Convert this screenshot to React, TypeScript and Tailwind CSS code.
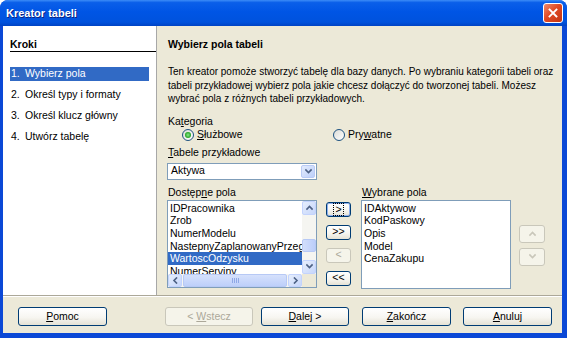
import React from "react";

const U = ({ children }: { children: React.ReactNode }) => (
  <span className="underline underline-offset-[1px]">{children}</span>
);

function Chevron({ dir, color = "#4d6185", size = 7 }: { dir: "up" | "down" | "left" | "right"; color?: string; size?: number }) {
  const paths: Record<string, string> = {
    up: "M1 5 L3.5 2.5 L6 5",
    down: "M1 2 L3.5 4.5 L6 2",
    left: "M4.5 1 L2 3.5 L4.5 6",
    right: "M2.5 1 L5 3.5 L2.5 6",
  };
  return (
    <svg width={size} height={size} viewBox="0 0 7 7">
      <path d={paths[dir]} fill="none" stroke={color} strokeWidth="1.6" strokeLinecap="square" />
    </svg>
  );
}

function ScrollBtn({ dir, className = "" }: { dir: "up" | "down" | "left" | "right"; className?: string }) {
  return (
    <div
      className={`flex items-center justify-center rounded-[2px] border border-[#c3d3fd] bg-[linear-gradient(135deg,#e6eefc_0%,#c6d6fb_100%)] ${className}`}
    >
      <Chevron dir={dir} />
    </div>
  );
}

function Radio({ checked }: { checked?: boolean }) {
  return (
    <span className="w-[12px] h-[12px] rounded-full border border-[#1c5180] bg-[linear-gradient(135deg,#dcdcd7_0%,#ffffff_100%)] flex items-center justify-center shrink-0">
      {checked && <span className="w-[6px] h-[6px] rounded-full bg-[radial-gradient(circle,#8ae88a_0%,#21a121_70%)]" />}
    </span>
  );
}

function Btn({
  children,
  disabled,
  className = "",
  focus,
}: {
  children: React.ReactNode;
  disabled?: boolean;
  className?: string;
  focus?: boolean;
}) {
  return (
    <div
      className={`flex items-center justify-center rounded-[3px] border ${
        disabled
          ? "border-[#c9c7ba] bg-[#f5f4ea] text-[#aca899]"
          : "border-[#003c74] bg-[linear-gradient(180deg,#ffffff_0%,#f7f6f1_55%,#e5e2d5_100%)] text-black"
      } ${focus ? "shadow-[inset_0_0_0_1px_#8fb0ef]" : ""} ${className}`}
    >
      {focus ? (
        <span className="border border-dotted border-black px-[1px] leading-[11px]">{children}</span>
      ) : (
        children
      )}
    </div>
  );
}

export default function App() {
  const available = ["IDPracownika", "Zrob", "NumerModelu", "NastepnyZaplanowanyPrzeglad", "WartoscOdzysku", "NumerServiny"];
  const chosen = ["IDAktywow", "KodPaskowy", "Opis", "Model", "CenaZakupu"];
  return (
    <div className="w-[567px] h-[338px] bg-white">
      <div className="w-[567px] h-[338px] flex flex-col rounded-t-[8px] overflow-hidden bg-[#0b48d6] font-['Liberation_Sans',Arial,sans-serif] text-[10.5px] text-black">
        {/* Title bar */}
        <div className="h-[26px] shrink-0 flex items-center justify-between pl-[6px] pr-[4px] bg-[linear-gradient(180deg,#3c8cf7_0%,#0a5fe9_10%,#0055e5_45%,#0052dd_85%,#0043c4_100%)]">
          <span className="text-white font-bold text-[11px] [text-shadow:1px_1px_0_#0b2383]">Kreator tabeli</span>
          <div className="w-[20px] h-[20px] rounded-[3px] border border-white bg-[linear-gradient(135deg,#f08a6c_0%,#e04a25_45%,#c23512_100%)] flex items-center justify-center">
            <svg width="10" height="10" viewBox="0 0 10 10">
              <path d="M1.5 1.5 L8.5 8.5 M8.5 1.5 L1.5 8.5" stroke="white" strokeWidth="1.8" strokeLinecap="square" />
            </svg>
          </div>
        </div>

        {/* Body */}
        <div className="flex-1 ml-[3px] mr-[5px] mb-[5px] bg-[#ece9d8] flex flex-col">
          <div className="h-[269px] flex">
            {/* Left panel */}
            <div className="w-[154px] shrink-0 bg-white border-r border-[#a8a8a8] pl-[7px] pt-[12px]">
              <div className="font-bold leading-[13px] border-b border-black">Kroki</div>
              <div className="flex flex-col gap-[7px] mt-[15px] mr-[7px]">
                <div className="h-[14px] flex items-center bg-[#316ac5] text-white">
                  <span className="w-[15px] pl-[1px]">1.</span>
                  <span>Wybierz pola</span>
                </div>
                <div className="h-[14px] flex items-center">
                  <span className="w-[15px] pl-[1px]">2.</span>
                  <span>Określ typy i formaty</span>
                </div>
                <div className="h-[14px] flex items-center">
                  <span className="w-[15px] pl-[1px]">3.</span>
                  <span>Określ klucz główny</span>
                </div>
                <div className="h-[14px] flex items-center">
                  <span className="w-[15px] pl-[1px]">4.</span>
                  <span>Utwórz tabelę</span>
                </div>
              </div>
            </div>

            {/* Right panel */}
            <div className="flex-1 min-w-0 overflow-hidden pl-[11px] pt-[12px] flex flex-col">
              <div className="font-bold leading-[13px]">Wybierz pola tabeli</div>
              <div className="mt-[14px] leading-[13.5px] whitespace-nowrap text-[10px]">
                Ten kreator pomoże stworzyć tabelę dla bazy danych. Po wybraniu kategorii tabeli oraz
                <br />
                tabeli przykładowej wybierz pola jakie chcesz dołączyć do tworzonej tabeli. Możesz
                <br />
                wybrać pola z różnych tabeli przykładowych.
              </div>
              <div className="mt-[9px] leading-[13px]">
                Ka<U>t</U>egoria
              </div>
              <div className="h-[14px] flex items-center pl-[14px]">
                <div className="w-[151px] flex items-center gap-[3px]">
                  <Radio checked />
                  <span>
                    <U>S</U>łużbowe
                  </span>
                </div>
                <div className="flex items-center gap-[3px]">
                  <Radio />
                  <span>
                    Pry<U>w</U>atne
                  </span>
                </div>
              </div>
              <div className="mt-[4px] leading-[13px]">
                <U>T</U>abele przykładowe
              </div>
              <div className="mt-[4px] w-[150px] h-[17px] border border-[#7f9db9] bg-white flex items-center justify-between pl-[3px] pr-[1px] -ml-[1px]">
                <span>Aktywa</span>
                <div className="w-[14px] h-[13px] rounded-[2px] border border-[#b9cbf6] bg-[linear-gradient(135deg,#e3ecfd_0%,#bccffa_100%)] flex items-center justify-center">
                  <Chevron dir="down" />
                </div>
              </div>

              {/* Lists row */}
              <div className="mt-[6px] flex items-start">
                <div className="w-[150px] flex flex-col -ml-[1px]">
                  <div className="h-[14px] leading-[13px] pl-[1px]">
                    Dostęp<U>n</U>e pola
                  </div>
                  <div className="h-[88px] border border-[#7f9db9] bg-white flex flex-col">
                    <div className="flex h-[73px]">
                      <div className="flex-1 overflow-hidden pt-[1px]">
                        {available.map((it, i) => (
                          <div
                            key={it}
                            className={`h-[12.7px] leading-[12.7px] pl-[2px] whitespace-nowrap ${
                              i === 4 ? "bg-[#316ac5] text-white" : ""
                            }`}
                          >
                            {it}
                          </div>
                        ))}
                      </div>
                      <div className="w-[14px] flex flex-col bg-[#f5f5f1]">
                        <ScrollBtn dir="up" className="h-[14px]" />
                        <div className="flex-1 flex flex-col pt-[24px]">
                          <div className="h-[13px] rounded-[2px] border border-[#b7c9f5] bg-[linear-gradient(90deg,#d2defb_0%,#bccefa_100%)]" />
                        </div>
                        <ScrollBtn dir="down" className="h-[14px]" />
                      </div>
                    </div>
                    <div className="flex h-[13px]">
                      <div className="flex-1 flex bg-[#f5f5f1]">
                        <ScrollBtn dir="left" className="w-[14px]" />
                        <div className="flex-1 px-[1px]">
                          <div className="h-full rounded-[2px] border border-[#b7c9f5] bg-[linear-gradient(180deg,#d6e1fc_0%,#bdcffa_100%)] flex items-center justify-center gap-[1px]">
                            <span className="w-[1px] h-[5px] bg-[#8fa8e6]" />
                            <span className="w-[1px] h-[5px] bg-[#8fa8e6]" />
                            <span className="w-[1px] h-[5px] bg-[#8fa8e6]" />
                            <span className="w-[1px] h-[5px] bg-[#8fa8e6]" />
                          </div>
                        </div>
                        <ScrollBtn dir="right" className="w-[14px]" />
                      </div>
                      <div className="w-[14px] bg-[#ece9d8]" />
                    </div>
                  </div>
                </div>

                <div className="ml-[9px] w-[25px] pt-[16px] flex flex-col gap-[8px]">
                  <Btn className="h-[15px]" focus>
                    &gt;
                  </Btn>
                  <Btn className="h-[15px]">&gt;&gt;</Btn>
                  <Btn className="h-[15px]" disabled>
                    &lt;
                  </Btn>
                  <Btn className="h-[15px]">&lt;&lt;</Btn>
                </div>

                <div className="ml-[10px] w-[150px] flex flex-col">
                  <div className="h-[14px] leading-[13px] pl-[1px]">
                    <U>W</U>ybrane pola
                  </div>
                  <div className="h-[89px] border border-[#7f9db9] bg-white pt-[1px] pl-[2px]">
                    {chosen.map((it) => (
                      <div key={it} className="h-[12.7px] leading-[12.7px]">
                        {it}
                      </div>
                    ))}
                  </div>
                </div>

                <div className="ml-[8px] w-[26px] pt-[39px] flex flex-col gap-[5px]">
                  <Btn className="h-[18px]" disabled>
                    <Chevron dir="up" color="#c9c7ba" />
                  </Btn>
                  <Btn className="h-[18px]" disabled>
                    <Chevron dir="down" color="#c9c7ba" />
                  </Btn>
                </div>
              </div>
            </div>
          </div>

          {/* Separator */}
          <div className="h-[2px] border-t border-[#aca899] bg-white" />

          {/* Bottom buttons */}
          <div className="flex-1 flex items-start pt-[10px]">
            <Btn className="ml-[15px] w-[89px] h-[19px]">
              <span>
                <U>P</U>omoc
              </span>
            </Btn>
            <Btn className="ml-[58px] w-[88px] h-[19px]" disabled>
              <span>
                &lt; <U>W</U>stecz
              </span>
            </Btn>
            <Btn className="ml-[8px] w-[88px] h-[19px]">
              <span>
                <U>D</U>alej &gt;
              </span>
            </Btn>
            <Btn className="ml-[13px] w-[89px] h-[19px]">
              <span>
                <U>Z</U>akończ
              </span>
            </Btn>
            <Btn className="ml-[12px] w-[89px] h-[19px]">
              <span>
                <U>A</U>nuluj
              </span>
            </Btn>
          </div>
        </div>
      </div>
    </div>
  );
}
